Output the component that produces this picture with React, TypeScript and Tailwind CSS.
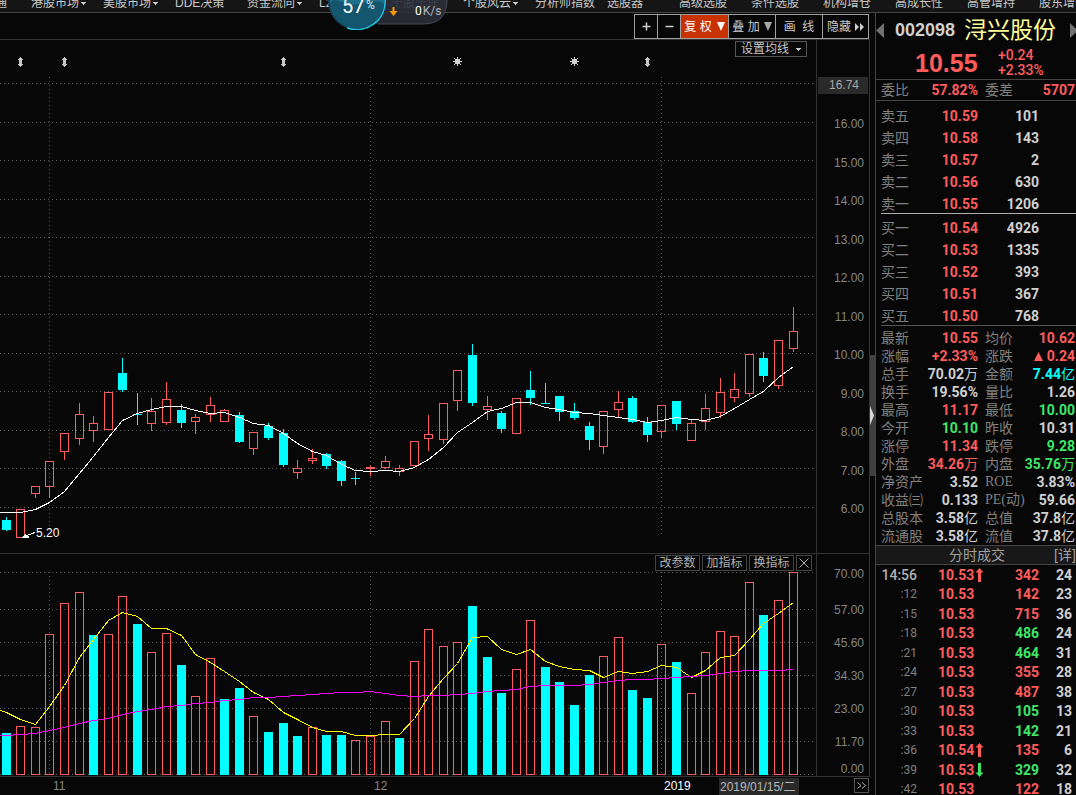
import React from "react";

type Candle = {
  up: boolean;
  top: number;
  bottom: number;
  high: number;
  low: number;
  volUp: boolean;
  vol: number;
};

const RED = "#ff5c5c";
const CYAN = "#00ffff";
const GRID = "#5a5a5a";

// up, body top, body bottom, high, low, volume bar is hollow, volume bar top
const rows: [number, number, number, number, number, number, number][] = [
  [0, 520, 530, 517, 531, 0, 733],
  [1, 509, 538, 509, 538, 1, 726],
  [1, 486, 494, 486, 498, 1, 727],
  [1, 461, 487, 461, 498, 1, 634],
  [1, 433, 452, 433, 460, 1, 603],
  [1, 414, 439, 403, 445, 1, 592],
  [1, 423, 431, 416, 442, 0, 635],
  [1, 392, 430, 392, 430, 1, 634],
  [0, 373, 390, 358, 392, 1, 596],
  [0, 414, 415, 393, 425, 0, 624],
  [1, 411, 424, 398, 431, 1, 652],
  [1, 399, 423, 382, 425, 1, 633],
  [0, 410, 423, 404, 428, 0, 665],
  [1, 417, 422, 414, 434, 1, 696],
  [1, 405, 415, 397, 422, 1, 658],
  [1, 410, 422, 409, 422, 0, 699],
  [0, 415, 442, 412, 443, 0, 688],
  [1, 432, 449, 432, 455, 1, 716],
  [0, 426, 438, 423, 440, 0, 732],
  [0, 433, 465, 429, 467, 0, 723],
  [1, 468, 473, 460, 479, 0, 736],
  [1, 458, 461, 449, 464, 1, 727],
  [0, 454, 466, 453, 469, 0, 735],
  [0, 461, 481, 460, 486, 0, 735],
  [0, 478, 479, 472, 485, 1, 740],
  [1, 467, 469, 466, 476, 1, 736],
  [1, 461, 468, 456, 469, 1, 721],
  [1, 468, 472, 465, 476, 0, 738],
  [1, 441, 466, 441, 466, 1, 661],
  [1, 434, 439, 415, 451, 1, 629],
  [1, 403, 440, 403, 444, 1, 646],
  [1, 370, 401, 370, 411, 1, 642],
  [0, 355, 403, 344, 406, 0, 606],
  [1, 406, 410, 396, 420, 0, 657],
  [0, 413, 429, 411, 433, 0, 693],
  [1, 398, 434, 398, 434, 1, 669],
  [0, 390, 398, 371, 405, 1, 620],
  [0, 403, 404, 383, 404, 0, 667],
  [0, 396, 412, 396, 421, 0, 682],
  [0, 411, 418, 403, 420, 0, 705],
  [0, 426, 440, 422, 450, 0, 675],
  [1, 411, 447, 411, 454, 1, 656],
  [1, 402, 410, 391, 418, 1, 637],
  [0, 398, 422, 396, 423, 0, 690],
  [0, 422, 435, 417, 442, 0, 698],
  [1, 405, 432, 405, 438, 1, 644],
  [0, 401, 424, 401, 430, 0, 662],
  [1, 423, 441, 420, 441, 1, 693],
  [1, 408, 422, 394, 430, 1, 652],
  [1, 392, 413, 378, 418, 1, 631],
  [1, 389, 398, 373, 402, 1, 636],
  [1, 354, 394, 354, 397, 1, 582],
  [0, 358, 376, 352, 382, 0, 615],
  [1, 340, 386, 340, 389, 1, 600],
  [1, 331, 349, 307, 352, 1, 572],
];

const candles: Candle[] = rows.map(([u, top, bottom, high, low, v, vol]) => ({
  up: u === 1,
  top,
  bottom,
  high,
  low,
  volUp: v === 1,
  vol,
}));

const priceMa = [
  512, 512, 509, 502, 491, 473, 456, 437, 420, 413, 409, 406, 406, 410, 413, 412, 417, 423, 425,
  433, 443, 451, 455, 464, 470, 471, 470, 471, 467, 459, 447, 432, 422, 411, 408, 402, 402, 407,
  409, 412, 413, 415, 417, 419, 422, 420, 417, 419, 420, 416, 408, 399, 391, 377, 366,
];
const volShort = [
  712, 719, 724, 706, 685, 657, 639, 620, 612, 616, 628, 628, 635, 654, 662, 671, 681, 692, 699,
  712, 719, 727, 731, 731, 735, 735, 734, 734, 718, 696, 678, 663, 637, 636, 649, 654, 649, 661,
  666, 669, 670, 677, 671, 673, 671, 665, 667, 677, 670, 657, 655, 639, 623, 613, 602,
];
const volLong = [
  735, 734, 733, 730, 727, 723, 720, 718, 714, 711, 709, 706, 705, 703, 702, 700, 699, 697, 697,
  696, 695, 694, 693, 692, 692, 691, 693, 695, 696, 695, 695, 694, 693, 691, 690, 689, 686, 685,
  685, 685, 684, 682, 680, 679, 679, 678, 677, 676, 675, 673, 671, 670, 670, 670, 669,
];

// Seven candles take 102 pixels
const cx = (i: number) => Math.floor(6.2 + (i * 102) / 7);
const linePoints = (ys: number[], startY: number) =>
  `0,${startY}.5 ` + ys.map((y, i) => `${cx(i) + 0.5},${y}.5`).join(" ");

const monthLines = [49, 370, 661];

function Grid({ ys, from, to }: { ys: number[]; from: number; to: number }) {
  return (
    <g stroke={GRID} strokeDasharray="1 3">
      {ys.map((y) => (
        <line key={y} x1="0" x2="816" y1={y + 0.5} y2={y + 0.5} />
      ))}
      {monthLines.map((x) => (
        <line key={x} x1={x + 0.5} x2={x + 0.5} y1={from} y2={to} />
      ))}
    </g>
  );
}

function PriceChart() {
  return (
    <svg
      className="block h-full w-full"
      viewBox="0 40 816 513"
      preserveAspectRatio="none"
      shapeRendering="crispEdges"
      aria-label="K线图"
      role="img"
    >
      <Grid ys={[83, 122, 160, 199, 237, 276, 314, 353, 391, 430, 468, 507]} from={77} to={534} />
      {[20, 64, 283, 647].map((x) => (
        <path
          key={x}
          transform={`translate(${x - 2} 57)`}
          fill="#c8c8c8"
          d="M2 0h1v1h1v1h1v1h-1v4h1v1h-1v1h-1v1h-1v-1h-1v-1h-1v-1h1v-4h-1v-1h1v-1h1z"
        />
      ))}
      {[457, 574].map((x) => (
        <g key={x} transform={`translate(${x - 4} 57)`} fill="#d0d0d0">
          <rect x="2" y="2" width="5" height="5" />
          <rect x="4" y="0" width="1" height="9" />
          <rect x="0" y="4" width="9" height="1" />
          <rect x="1" y="1" width="1" height="1" />
          <rect x="7" y="1" width="1" height="1" />
          <rect x="1" y="7" width="1" height="1" />
          <rect x="7" y="7" width="1" height="1" />
        </g>
      ))}
      {candles.map((c, i) => {
        const x = cx(i);
        return c.up ? (
          <g key={i} stroke={RED} fill="none">
            <rect x={x - 3.5} y={c.top + 0.5} width="8" height={c.bottom - c.top - 1} />
            <line x1={x + 0.5} x2={x + 0.5} y1={c.high} y2={c.top} />
            <line x1={x + 0.5} x2={x + 0.5} y1={c.bottom} y2={c.low} />
          </g>
        ) : (
          <g key={i} fill={CYAN}>
            <rect x={x - 4} y={c.top} width="9" height={c.bottom - c.top} />
            <rect x={x} y={c.high} width="1" height={c.low - c.high} />
          </g>
        );
      })}
      <polyline points={linePoints(priceMa, 512)} fill="none" stroke="#ffffff" />
      <path d="M24 536.5L35 532.5" stroke="#ffffff" />
      <path d="M22 537l4-3v2h3v2h-7z" fill="#ffffff" />
    </svg>
  );
}

function VolumeChart() {
  return (
    <svg
      className="block h-full w-full"
      viewBox="0 554 816 222"
      preserveAspectRatio="none"
      shapeRendering="crispEdges"
      aria-label="成交量"
      role="img"
    >
      <Grid ys={[572, 609, 642, 675, 708, 741, 774]} from={572} to={776} />
      {candles.map((c, i) =>
        c.volUp ? (
          <rect
            key={i}
            x={cx(i) - 3.5}
            y={c.vol + 0.5}
            width="8"
            height={774 - c.vol}
            fill="none"
            stroke={RED}
          />
        ) : (
          <rect key={i} x={cx(i) - 4} y={c.vol} width="9" height={775 - c.vol} fill={CYAN} />
        ),
      )}
      <polyline points={linePoints(volShort, 710)} fill="none" stroke="#ffff00" />
      <polyline points={linePoints(volLong, 735)} fill="none" stroke="#ff00ff" />
    </svg>
  );
}

const menu: { text: string; drop?: boolean }[] = [
  { text: "港股市场", drop: true },
  { text: "美股市场", drop: true },
  { text: "DDE决策" },
  { text: "资金流向", drop: true },
  { text: "L2" },
  { text: "千股千评" },
  { text: "个股风云", drop: true },
  { text: "分析师指数" },
  { text: "选股器" },
  { text: "高级选股" },
  { text: "条件选股" },
  { text: "机构增仓" },
  { text: "高成长性" },
  { text: "高管增持" },
  { text: "股东增长" },
];

function Caret() {
  return (
    <svg className="h-[3px] w-[5px]" viewBox="0 0 5 3" shapeRendering="crispEdges">
      <path d="M0 0h5v1h-1v1h-1v1h-1v-1h-1v-1h-1z" fill="#c8c8c8" />
    </svg>
  );
}

function SpeedBall() {
  return (
    <div className="absolute top-0 left-[328px] h-[30px] w-[120px]">
      <svg className="absolute inset-0 h-full w-full" viewBox="0 0 120 30">
        <path d="M29 -12H107A12 18 0 0 1 119 0Q119 24 95 24H29z" fill="#2b2f3a" fillOpacity="0.9" />
        <path d="M119 0Q119 24 95 24H50" fill="none" stroke="#454955" />
        <circle cx="29" cy="1" r="29" fill="#1a4152" />
        <circle cx="29" cy="1" r="27.5" fill="#14566e" />
        <path d="M2 0H56V3Q44 -1 34 3T14 2T2 4z" fill="#1c7188" />
        <path d="M19 27.7A28.2 28.2 0 0 0 57.2 0" fill="none" stroke="#1cc3dc" strokeWidth="1.6" />
        <path d="M64.500 7h2v4h3l-4 5l-4-5h3z" fill="#ff9a00" />
      </svg>
      <span className="absolute top-[-6px] left-[14px] font-[Roboto] text-[20px] leading-6 text-white">
        57
      </span>
      <span className="absolute top-[-3px] left-[38px] font-[Roboto] text-xs leading-4 text-[#d8e8ee]">
        %
      </span>
      <span className="absolute top-[3px] left-[87px] font-[Roboto] text-xs leading-4 text-white">
        0<span className="ml-px text-[#b0b4bc]">K/s</span>
      </span>
    </div>
  );
}

function ToolButton({ label, className, children }: { label?: string; className: string; children: React.ReactNode }) {
  return (
    <button
      type="button"
      aria-label={label}
      className={`flex items-center justify-center whitespace-pre border-r border-[#a0a0a0] ${className}`}
    >
      {children}
    </button>
  );
}

const asks = [
  ["卖五", "10.59", "101"],
  ["卖四", "10.58", "143"],
  ["卖三", "10.57", "2"],
  ["卖二", "10.56", "630"],
  ["卖一", "10.55", "1206"],
];
const bids = [
  ["买一", "10.54", "4926"],
  ["买二", "10.53", "1335"],
  ["买三", "10.52", "393"],
  ["买四", "10.51", "367"],
  ["买五", "10.50", "768"],
];

const tone = {
  r: "text-[#ff5c5c]",
  g: "text-[#3fe668]",
  w: "text-[#d0d0d0]",
  c: "text-[#00ffff]",
};
type Tone = keyof typeof tone;

const stats: [string, string, Tone][] = [
  ["最新", "10.55", "r"],
  ["均价", "10.62", "r"],
  ["涨幅", "+2.33%", "r"],
  ["涨跌", "▲0.24", "r"],
  ["总手", "70.02万", "w"],
  ["金额", "7.44亿", "c"],
  ["换手", "19.56%", "w"],
  ["量比", "1.26", "w"],
  ["最高", "11.17", "r"],
  ["最低", "10.00", "g"],
  ["今开", "10.10", "g"],
  ["昨收", "10.31", "w"],
  ["涨停", "11.34", "r"],
  ["跌停", "9.28", "g"],
  ["外盘", "34.26万", "r"],
  ["内盘", "35.76万", "g"],
  ["净资产", "3.52", "w"],
  ["ROE", "3.83%", "w"],
  ["收益㈢", "0.133", "w"],
  ["PE(动)", "59.66", "w"],
  ["总股本", "3.58亿", "w"],
  ["总值", "37.8亿", "w"],
  ["流通股", "3.58亿", "w"],
  ["流值", "37.8亿", "w"],
];

const ticks: [string, string, "" | "up" | "down", string, Tone, string][] = [
  ["14:56", "10.53", "up", "342", "r", "24"],
  [":12", "10.53", "", "142", "r", "23"],
  [":15", "10.53", "", "715", "r", "36"],
  [":18", "10.53", "", "486", "g", "24"],
  [":21", "10.53", "", "464", "g", "31"],
  [":24", "10.53", "", "355", "r", "28"],
  [":27", "10.53", "", "487", "r", "38"],
  [":30", "10.53", "", "105", "g", "13"],
  [":33", "10.53", "", "142", "g", "21"],
  [":36", "10.54", "up", "135", "r", "6"],
  [":39", "10.53", "down", "329", "g", "32"],
  [":42", "10.53", "", "122", "r", "18"],
];

const NUM = "font-['Roboto','Noto_Sans_CJK_SC',sans-serif] font-bold";

function Value({ text, color }: { text: string; color: Tone }) {
  const unit = /[万亿]$/.test(text) ? text.slice(-1) : "";
  const rise = text.startsWith("▲");
  const body = text.replace(/[万亿▲]/g, "");
  return (
    <span className={`flex items-center ${NUM} ${tone[color]}`}>
      {rise && (
        <svg className="mr-1 h-[9px] w-[9px]" viewBox="0 0 9 9">
          <path d="M4.500 0L9 9H0z" fill={RED} />
        </svg>
      )}
      {body}
      {unit && <span className="font-normal">{unit}</span>}
    </span>
  );
}

function Book({ data, className }: { data: string[][]; className: string }) {
  return (
    <div className={`ml-[5px] ${className}`}>
      <table className="w-full table-fixed leading-[22px]">
        <tbody>
          {data.map(([name, price, qty]) => (
            <tr key={name} className="h-[22px]">
              <th scope="row" className="w-[40px] p-0 text-left font-normal text-[#808080]">
                {name}
              </th>
              <td className={`w-[57px] p-0 text-right ${NUM} text-[#ff5c5c]`}>{price}</td>
              <td className={`w-[61px] p-0 text-right ${NUM} text-[#d0d0d0]`}>{qty}</td>
              <td className="p-0" />
            </tr>
          ))}
        </tbody>
      </table>
    </div>
  );
}

function TickArrow({ dir }: { dir: "up" | "down" }) {
  return (
    <svg className="ml-px inline-block h-[14px] w-[9px] align-[-2px]" viewBox="0 0 9 14">
      {dir === "up" ? (
        <path d="M4.500 0L8.500 4.500H6V14H3V4.500H0.500z" fill={RED} />
      ) : (
        <path d="M4.500 14L8.500 9.500H6V0H3V9.500H0.500z" fill="#3fe668" />
      )}
    </svg>
  );
}

function QuotePanel() {
  return (
    <aside className="flex w-[201px] shrink-0 flex-col overflow-hidden border-l border-[#444] text-sm">
      <header className="h-[67px] shrink-0 border-b border-[#444]">
        <div className="flex h-[34px] items-center">
          <button type="button" aria-label="上一只">
            <svg className="block h-[15px] w-2" viewBox="0 0 8 15">
              <path d="M8 0V15L0 7.500z" fill="#707070" />
            </svg>
          </button>
          <span className="ml-[11px] font-['Liberation_Sans'] text-lg leading-6 font-bold text-[#d0d0d0]">
            002098
          </span>
          <h1 className="ml-[9px] text-[23px] leading-7 whitespace-nowrap text-[#ffff99]">浔兴股份</h1>
          <button type="button" aria-label="下一只" className="ml-auto w-[6px] overflow-hidden">
            <svg className="block h-[15px] w-2" viewBox="0 0 8 15">
              <path d="M0 0V15L8 7.500z" fill="#707070" />
            </svg>
          </button>
        </div>
        <div className="flex h-[32px] items-center pl-[39px] text-[#ff5c5c]">
          <strong className="w-[83px] font-['Liberation_Sans'] text-[25px] leading-7 font-bold">10.55</strong>
          <div className="font-[Roboto] leading-[15px] font-medium">
            <div>+0.24</div>
            <div>+2.33%</div>
          </div>
        </div>
      </header>

      <dl className="grid h-[21px] shrink-0 grid-cols-[97px_90px] items-center gap-x-[7px] border-b border-[#444] pl-[5px]">
        {(
          [
            ["委比", "57.82%"],
            ["委差", "5707"],
          ] as const
        ).map(([k, v]) => (
          <div key={k} className="flex justify-between">
            <dt className="text-[#808080]">{k}</dt>
            <dd>
              <Value text={v} color="r" />
            </dd>
          </div>
        ))}
      </dl>

      <Book data={asks} className="h-[113px] shrink-0 border-b border-[#b0b0b0] pt-1" />
      <Book data={bids} className="h-[112px] shrink-0 border-b border-[#555] pt-[3px]" />

      <dl className="grid shrink-0 grid-cols-[97px_90px] gap-x-[7px] pt-[3px] pl-[5px] leading-[18px]">
        {stats.map(([k, v, t]) => (
          <div key={k} className="flex h-[18px] justify-between whitespace-nowrap">
            <dt
              className={
                /^[A-Z]/.test(k)
                  ? "font-['Liberation_Serif','Noto_Sans_CJK_SC',serif] text-[#808080]"
                  : "text-[#808080]"
              }
            >
              {k}
            </dt>
            <dd>
              <Value text={v} color={t} />
            </dd>
          </div>
        ))}
      </dl>

      <div className="flex h-5 shrink-0 items-center border-y border-[#444] bg-[#181818] pl-[73px] whitespace-nowrap text-[#a0a0a0]">
        <h2>分时成交</h2>
        <a href="#detail" className="ml-[49px]">
          [详]
        </a>
      </div>

      <table className="h-[234px] w-full shrink-0 table-fixed leading-[18px]">
        <tbody>
          {ticks.map(([time, price, dir, qty, t, n], i) => (
            <tr key={time}>
              <td
                className={
                  i === 0
                    ? "w-[41px] p-0 text-right font-[Roboto] font-medium text-[#b0b0b0]"
                    : "w-[41px] p-0 text-right font-[Roboto] text-xs text-[#808080]"
                }
              >
                {time}
              </td>
              <td className={`w-[80px] p-0 pl-[21px] whitespace-nowrap ${NUM} text-[#ff5c5c]`}>
                {price}
                {dir && <TickArrow dir={dir} />}
              </td>
              <td className={`w-[42px] p-0 text-right ${NUM} ${tone[t]}`}>{qty}</td>
              <td className={`p-0 pr-1 text-right ${NUM} text-[#d0d0d0]`}>{n}</td>
            </tr>
          ))}
        </tbody>
      </table>
    </aside>
  );
}

export default function App() {
  return (
    <div className="relative flex h-screen flex-col overflow-hidden bg-[#070707] font-['Liberation_Sans','Noto_Sans_CJK_SC',sans-serif] text-xs text-[#c8c8c8]">
      <nav className="flex h-[13px] shrink-0 overflow-hidden border-b border-[#444] bg-[#151515] leading-[7px] whitespace-nowrap">
        <a href="#connect" className="-ml-[5px] w-9 shrink-0">
          通
        </a>
        {menu.map((m) => (
          <a key={m.text} href="#menu" className="flex h-[7px] w-[72px] shrink-0 items-center gap-[2px]">
            {m.text}
            {m.drop && <Caret />}
          </a>
        ))}
      </nav>

      <div className="flex min-h-0 flex-1">
        <main className="flex min-w-0 flex-1 flex-col">
          <div className="flex h-[27px] shrink-0 justify-end border-b border-[#333] pr-px">
            <div className="mt-px flex h-[25px] border-y border-l border-[#a0a0a0]">
              <ToolButton label="放大" className="w-[23px]">
                <svg className="h-[9px] w-[9px]" viewBox="0 0 9 9">
                  <path d="M4.500 0.500v8M0.500 4.500h8" stroke="#d0d0d0" strokeWidth="1.500" />
                </svg>
              </ToolButton>
              <ToolButton label="缩小" className="w-[23px]">
                <svg className="h-[9px] w-[9px]" viewBox="0 0 9 9">
                  <path d="M0.500 4.500h8" stroke="#d0d0d0" strokeWidth="1.500" />
                </svg>
              </ToolButton>
              <ToolButton className="w-[48px] gap-[5px] bg-[#c83200] text-white">
                复 权
                <svg className="h-[9px] w-2" viewBox="0 0 8 9">
                  <path d="M0 0h8L4 9z" fill="#fff" />
                </svg>
              </ToolButton>
              <ToolButton className="w-[47px] gap-1">
                叠 加
                <svg className="h-[9px] w-2" viewBox="0 0 8 9">
                  <path d="M0 0h8L4 9z" fill="#a8a8a8" />
                </svg>
              </ToolButton>
              <ToolButton className="w-[47px]">{"画  线"}</ToolButton>
              <button type="button" className="flex w-[46px] items-center justify-center gap-1 border-r border-[#a0a0a0]">
                隐藏
                <svg className="h-2 w-[9px]" viewBox="0 0 9 8">
                  <path d="M0 0L4 4L0 8zM5 0L9 4L5 8z" fill="#d0d0d0" />
                </svg>
              </button>
            </div>
          </div>

          <section className="flex min-h-0 flex-1 border-b border-[#333]">
            <div className="relative min-w-0 flex-1">
              <PriceChart />
              <span className="absolute top-[485px] left-9 leading-4 text-white">5.20</span>
              <button
                type="button"
                className="absolute top-px right-[9px] flex h-4 w-[72px] items-center justify-center gap-[7px] border border-[#555]"
              >
                设置均线
                <Caret />
              </button>
            </div>
            <div className="w-[54px] shrink-0 border-x border-[#333] text-right leading-4 text-[#858585]">
              <div className="mx-px mt-[37px] bg-[#2a2a2a] pr-[9px] leading-[17px] text-[#a8a8a8]">16.74</div>
              <ul className="mt-[22px] flex h-[401px] flex-col justify-between pr-[5px]">
                {["16", "15", "14", "13", "12", "11", "10", "9", "8", "7", "6"].map((n) => (
                  <li key={n}>{n}.00</li>
                ))}
              </ul>
            </div>
          </section>

          <section className="flex h-[223px] shrink-0 border-b border-[#333]">
            <div className="relative min-w-0 flex-1">
              <VolumeChart />
              <div className="absolute top-px right-1 flex gap-[2px] text-[#b0b0b0]">
                {["改参数", "加指标", "换指标"].map((t) => (
                  <button key={t} type="button" className="h-4 w-[45px] border border-[#444] bg-[#070707] leading-[14px]">
                    {t}
                  </button>
                ))}
                <button
                  type="button"
                  aria-label="关闭"
                  className="flex h-4 w-4 items-center justify-center border border-[#444] bg-[#070707]"
                >
                  <svg className="h-[10px] w-[10px]" viewBox="0 0 10 10">
                    <path d="M0.500 0.500l9 9M9.500 0.500l-9 9" stroke="#b0b0b0" />
                  </svg>
                </button>
              </div>
            </div>
            <ul className="w-[54px] shrink-0 border-x border-[#333] pt-px pr-[5px] text-right leading-[33px] text-[#858585]">
              <li className="leading-[39px]">70.00</li>
              <li>57.00</li>
              <li>45.60</li>
              <li>34.30</li>
              <li>23.00</li>
              <li>11.70</li>
              <li className="leading-5">0.00</li>
            </ul>
          </section>

          <div className="flex h-[18px] shrink-0 pr-px pl-[53px] leading-[18px] text-[#858585]">
            <span className="w-[321px]">11</span>
            <span className="w-[290px]">12</span>
            <span className="w-[55px] text-white">2019</span>
            <span className="mt-px w-20 bg-[#2a2a2a] pl-px text-[#b8b8b8]">2019/01/15/二</span>
            <button
              type="button"
              aria-label="展开"
              className="mt-px ml-auto flex h-[15px] w-[15px] items-center justify-center border border-[#555]"
            >
              <svg className="h-[7px] w-[9px]" viewBox="0 0 9 7">
                <path d="M0.500 0.500L4 3.500L0.500 6.500M5 0.500L8.500 3.500L5 6.500" fill="none" stroke="#b0b0b0" />
              </svg>
            </button>
          </div>
        </main>

        <div className="flex w-[5px] shrink-0 flex-col pt-[342px]">
          <button type="button" aria-label="收起侧栏" className="flex h-[121px] items-center bg-[#404040]">
            <svg className="h-[19px] w-1" viewBox="0 0 4 19">
              <path d="M0 0L4 9.500L0 19z" fill="#d8d8d8" />
            </svg>
          </button>
        </div>

        <QuotePanel />
      </div>

      <SpeedBall />
    </div>
  );
}
